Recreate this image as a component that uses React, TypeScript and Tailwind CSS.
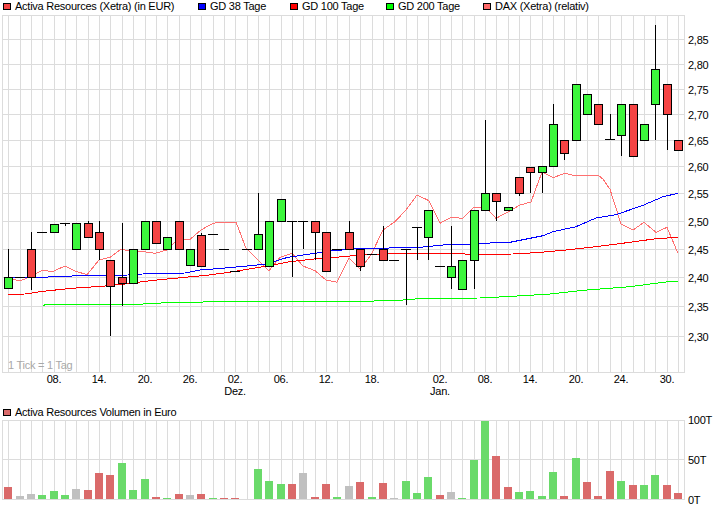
const cx = (i: number) => Math.round(8.3 + 11.35 * i);

const GREEN = "#3cf63c";
const RED = "#f54444";
const GRID = "#dcdcdc";

// y lines of the price scale (it is logarithmic, so the gaps shrink upward)
const priceTicks: [string, number][] = [
  ["2,85", 39],
  ["2,80", 64],
  ["2,75", 89],
  ["2,70", 114],
  ["2,65", 140],
  ["2,60", 166],
  ["2,55", 193],
  ["2,50", 221],
  ["2,45", 249],
  ["2,40", 277],
  ["2,35", 306],
  ["2,30", 336],
];

const dates: [number, string, string?][] = [
  [4, "08."],
  [8, "14."],
  [12, "20."],
  [16, "26."],
  [20, "02.", "Dez."],
  [24, "06."],
  [28, "12."],
  [32, "18."],
  [38, "02.", "Jan."],
  [42, "08."],
  [46, "14."],
  [50, "20."],
  [54, "24."],
  [58, "30."],
];

// [wick top, wick bottom, body top, body bottom, "g" | "r" | "d"]; doji have body top = tick y
type Candle = [number, number, number, number, string];
const candles: Candle[] = [
  [249, 288, 277, 288, "g"],
  [277, 277, 277, 277, "d"],
  [232, 290, 249, 277, "r"],
  [232, 232, 232, 232, "d"],
  [224, 232, 224, 232, "g"],
  [223, 226, 223, 223, "d"],
  [223, 249, 223, 249, "g"],
  [221, 237, 223, 237, "r"],
  [221, 260, 232, 249, "r"],
  [260, 336, 260, 286, "r"],
  [223, 306, 277, 283, "r"],
  [249, 283, 249, 283, "g"],
  [221, 249, 221, 249, "g"],
  [221, 243, 221, 243, "r"],
  [237, 249, 237, 249, "g"],
  [221, 249, 221, 249, "r"],
  [249, 265, 249, 265, "g"],
  [233, 266, 235, 266, "r"],
  [234, 234, 234, 234, "d"],
  [249, 249, 249, 249, "d"],
  [271, 271, 271, 271, "d"],
  [249, 249, 249, 249, "d"],
  [193, 249, 234, 249, "g"],
  [221, 266, 221, 266, "g"],
  [199, 221, 199, 221, "g"],
  [221, 277, 221, 221, "d"],
  [221, 249, 221, 221, "d"],
  [221, 260, 221, 232, "r"],
  [232, 271, 232, 271, "r"],
  [249, 249, 249, 249, "d"],
  [221, 249, 232, 249, "r"],
  [249, 271, 249, 266, "r"],
  [254, 254, 254, 254, "d"],
  [226, 260, 249, 260, "r"],
  [260, 260, 260, 260, "d"],
  [249, 305, 249, 249, "d"],
  [227, 260, 227, 227, "d"],
  [210, 260, 210, 237, "g"],
  [266, 266, 266, 266, "d"],
  [226, 289, 266, 277, "g"],
  [260, 289, 260, 289, "g"],
  [210, 289, 210, 260, "g"],
  [120, 210, 193, 210, "g"],
  [193, 221, 193, 201, "r"],
  [207, 210, 207, 210, "g"],
  [177, 196, 177, 193, "r"],
  [167, 193, 167, 172, "r"],
  [166, 193, 166, 172, "g"],
  [104, 166, 124, 166, "g"],
  [140, 160, 140, 153, "r"],
  [84, 140, 84, 140, "g"],
  [94, 114, 94, 114, "g"],
  [104, 124, 104, 124, "r"],
  [114, 139, 139, 139, "d"],
  [104, 156, 104, 135, "g"],
  [104, 156, 104, 156, "r"],
  [124, 140, 124, 140, "g"],
  [25, 140, 69, 104, "g"],
  [84, 150, 84, 114, "r"],
  [140, 150, 140, 150, "r"],
];

const blue = "8,277 48,277 72,276 105,275.5 128,275 150,273.5 185,273 200,270 220,268.5 247,266 267,264 287,257.5 303,255 333,250.7 363,248.3 416,247.7 446,244.7 470,244.3 490,243 510,242.3 530,238.3 543,235.7 553,231.7 576,226.7 596,218 616,214.7 643,205.3 663,196.7 678,193.3";
const red = "8,294.3 25,294 43,291.3 72,288.3 105,286 128,283.7 150,280.7 185,277.3 207,275.3 233,271.7 267,266 290,261.7 317,258.7 343,256.7 363,254.7 383,254 413,253.3 446,253.3 473,254.3 513,254 536,252.7 563,250.3 596,246.7 630,242.3 656,238.7 678,237.3";
const green = "43,305.3 48,304.3 138,304.3 173,302.3 275,301.3 363,301.3 400,300.3 423,298.3 480,298 523,295.7 550,294 583,290.3 630,286.7 663,282.3 678,281";
const dax = "8,278.3 20,281 30,276.7 42,270.7 53,271.3 65,266 76,271.3 87,274.7 99,260 110,257.3 121,249.3 133,251.3 144,251.7 155,253.3 167,250 178,239.3 190,239.3 201,230 213,223.3 224,222 236,222 246,248.3 258,260 269,270.7 280,257.3 292,253.3 303,266 315,270.7 326,280 337,282.3 349,258.3 360,269.3 371,255 383,230 395,221.7 406,210 417,195 429,200.7 440,223.3 451,217.3 463,218.3 474,207 485,207 496,218.3 508,212 520,205 531,202 542,172 553,177.7 565,173.3 576,176 587,175 599,176 603,179 610,189.3 621,224 633,230 644,222.3 656,232.3 667,227.3 678,253.3";

// [top y in px, "g" | "r" | "s"]; everything stands on y=499
const volumes: [number, string][] = [
  [487, "r"], [496, "s"], [494, "s"], [495, "g"], [491, "g"], [495, "g"], [489, "s"], [490, "r"],
  [473, "r"], [475, "r"], [463, "g"], [490, "g"], [479, "g"], [497, "r"], [498, "g"], [494, "r"],
  [495, "s"], [494, "r"], [498, "g"], [498, "r"], [498, "r"], [499, "s"], [469, "g"], [481, "g"],
  [484, "g"], [484, "r"], [473, "s"], [497, "r"], [484, "r"], [497, "g"], [486, "s"], [482, "r"],
  [497, "g"], [483, "r"], [498, "s"], [481, "g"], [493, "g"], [477, "g"], [495, "r"], [492, "s"],
  [498, "g"], [460, "g"], [421, "g"], [456, "r"], [487, "r"], [492, "g"], [491, "g"], [496, "g"],
  [472, "g"], [496, "r"], [458, "g"], [482, "r"], [496, "r"], [471, "r"], [481, "g"], [485, "r"],
  [485, "g"], [475, "g"], [485, "r"], [493, "r"],
];
const volColor: Record<string, string> = { g: "#6ada6a", r: "#da6a6a", s: "#c0c0c0" };

function VerticalGrid({ top, bottom }: { top: number; bottom: number }) {
  return (
    <>
      <line x1={2.5} x2={2.5} y1={top} y2={bottom} stroke={GRID} />
      <line x1={684.5} x2={684.5} y1={top} y2={bottom} stroke={GRID} />
      {candles.map((_, i) => (
        <line key={i} x1={cx(i) + 0.5} x2={cx(i) + 0.5} y1={top} y2={bottom} stroke={GRID} />
      ))}
    </>
  );
}

function PriceChart() {
  return (
    <svg width={726} height={390} viewBox="0 15 726 390" className="block">
      <g shapeRendering="crispEdges">
        <VerticalGrid top={15} bottom={373} />
        {[15, ...priceTicks.map((t) => t[1]), 372].map((y) => (
          <line key={y} x1={2} x2={685} y1={y + 0.5} y2={y + 0.5} stroke={GRID} />
        ))}
      </g>
      <text x={8} y={369} fill="#a8a8a8">1 Tick = 1 Tag</text>

      <g fill="none" shapeRendering="crispEdges">
        <polyline points={dax} stroke="#ff7070" />
        <polyline points={green} stroke="#00ff00" />
        <polyline points={red} stroke="#ff0000" />
        <polyline points={blue} stroke="#0000ff" />
      </g>

      <g shapeRendering="crispEdges" stroke="#000000">
        {candles.map(([wt, wb, bt, bb, kind], i) => {
          const x = cx(i);
          return (
            <g key={i}>
              {wb > wt && <line x1={x + 0.5} x2={x + 0.5} y1={wt} y2={wb} />}
              {kind === "d" ? (
                <line x1={x - 5} x2={x + 5} y1={bt + 0.5} y2={bt + 0.5} />
              ) : (
                <rect x={x - 4 + 0.5} y={bt + 0.5} width={8} height={bb - bt} fill={kind === "g" ? GREEN : RED} />
              )}
            </g>
          );
        })}
      </g>

      {priceTicks.map(([label, y]) => (
        <text key={label} x={688} y={y + 5} fill="#000000">{label}</text>
      ))}
      {dates.map(([i, day, month]) => (
        <g key={i} fill="#000000" textAnchor="middle">
          <text x={cx(i)} y={383}>{day}</text>
          {month && <text x={cx(i)} y={395}>{month}</text>}
        </g>
      ))}
    </svg>
  );
}

function VolumeChart() {
  return (
    <svg width={726} height={89} viewBox="0 419 726 89" className="block overflow-visible">
      <g shapeRendering="crispEdges">
        <VerticalGrid top={420} bottom={500} />
        {[420, 459, 499].map((y) => (
          <line key={y} x1={2} x2={685} y1={y + 0.5} y2={y + 0.5} stroke={GRID} />
        ))}
        {volumes.map(([top, kind], i) => (
          <rect key={i} x={cx(i) - 4} y={top} width={8} height={499 - top} fill={volColor[kind]} />
        ))}
      </g>
      <text x={688} y={424} fill="#000000">100T</text>
      <text x={688} y={464} fill="#000000">50T</text>
      <text x={688} y={504} fill="#000000">0T</text>
    </svg>
  );
}

function LegendItem({ color, label, className }: { color: string; label: string; className?: string }) {
  return (
    <div className={`flex items-center gap-1 ${className ?? ""}`}>
      <span className="h-[7px] w-2 border border-black" style={{ backgroundColor: color }} />
      <span>{label}</span>
    </div>
  );
}

export default function App() {
  return (
    <div className="h-[508px] w-[726px] overflow-hidden bg-white font-['Liberation_Sans',sans-serif] text-[11px] leading-none tracking-[-0.25px] text-black">
      <div className="flex h-[12px] items-center pl-[3px]">
        <LegendItem color="#f54444" label="Activa Resources (Xetra) (in EUR)" className="w-[195px]" />
        <LegendItem color="#0000ff" label="GD 38 Tage" className="w-[92px]" />
        <LegendItem color="#ff0000" label="GD 100 Tage" className="w-[96px]" />
        <LegendItem color="#00ff00" label="GD 200 Tage" className="w-[97px]" />
        <LegendItem color="#ff6a6a" label="DAX (Xetra) (relativ)" />
      </div>
      <div className="h-[3px]" />
      <PriceChart />
      <div className="flex h-[14px] items-center pl-[3px]">
        <LegendItem color="#da6a6a" label="Activa Resources Volumen in Euro" />
      </div>
      <VolumeChart />
    </div>
  );
}
